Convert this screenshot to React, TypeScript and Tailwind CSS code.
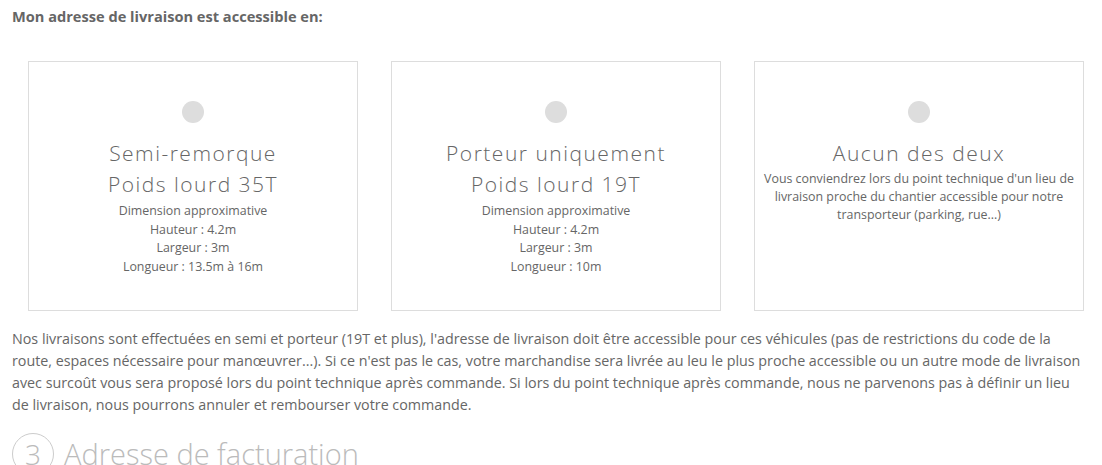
const TITLE_FONT = { fontFamily: '"Open Sans", Lato, sans-serif' };

type Option = { title: string[]; lines: string[]; wide?: boolean };

const OPTIONS: Option[] = [
  {
    title: ['Semi-remorque', 'Poids lourd 35T'],
    lines: ['Dimension approximative', 'Hauteur : 4.2m', 'Largeur : 3m', 'Longueur : 13.5m à 16m'],
  },
  {
    title: ['Porteur uniquement', 'Poids lourd 19T'],
    lines: ['Dimension approximative', 'Hauteur : 4.2m', 'Largeur : 3m', 'Longueur : 10m'],
  },
  {
    title: ['Aucun des deux'],
    lines: [
      "Vous conviendrez lors du point technique d'un lieu de livraison proche du chantier accessible pour notre transporteur (parking, rue...)",
    ],
    wide: true,
  },
];

function OptionCard({ option }: { option: Option }) {
  return (
    <div className="flex h-[250px] w-[330px] flex-col items-center border border-[#dddddd] bg-white pt-[39px] text-center">
      <span className="h-[22px] w-[22px] shrink-0 rounded-full bg-[#dddddd]" />
      <div className="mt-[15px] text-[21px] font-light leading-[31px] tracking-[1.5px] text-[#666666]" style={TITLE_FONT}>
        {option.title.map((t) => (
          <div key={t}>{t}</div>
        ))}
      </div>
      <div className={option.wide ? 'mt-[1px] px-[4px] text-[12.4px] leading-[18px] text-[#666666]' : 'mt-[2px] text-[12.4px] leading-[18.5px] text-[#666666]'}>
        {option.lines.map((l) => (
          <div key={l}>{l}</div>
        ))}
      </div>
    </div>
  );
}

export default function App() {
  return (
    <div className="h-[465px] overflow-hidden bg-white px-[12px] pt-[6px] text-[#666666]" style={{ fontFamily: '"Open Sans", sans-serif' }}>
      <h4 className="text-[14.6px] font-bold leading-[20px]">Mon adresse de livraison est accessible en:</h4>

      <div className="ml-[16px] mt-[35px] flex gap-[33px]">
        {OPTIONS.map((o) => (
          <OptionCard key={o.title[0]} option={o} />
        ))}
      </div>

      <p className="mt-[17px] text-[14.3px] leading-[22px]">
        Nos livraisons sont effectuées en semi et porteur (19T et plus), l'adresse de livraison doit être accessible pour ces véhicules (pas de restrictions du code de la route, espaces nécessaire pour manœuvrer...). Si ce n'est pas le cas, votre marchandise sera livrée au leu le plus proche accessible ou un autre mode de livraison avec surcoût vous sera proposé lors du point technique après commande. Si lors du point technique après commande, nous ne parvenons pas à définir un lieu de livraison, nous pourrons annuler et rembourser votre commande.
      </p>

      <div className="mt-[16px] flex items-center gap-[10px] text-[#bbbbbb]" style={TITLE_FONT}>
        <span className="flex h-[42px] w-[42px] shrink-0 items-center justify-center rounded-full border border-[#cccccc] text-[28px] font-light">3</span>
        <span className="text-[29px] font-light">Adresse de facturation</span>
      </div>
    </div>
  );
}
